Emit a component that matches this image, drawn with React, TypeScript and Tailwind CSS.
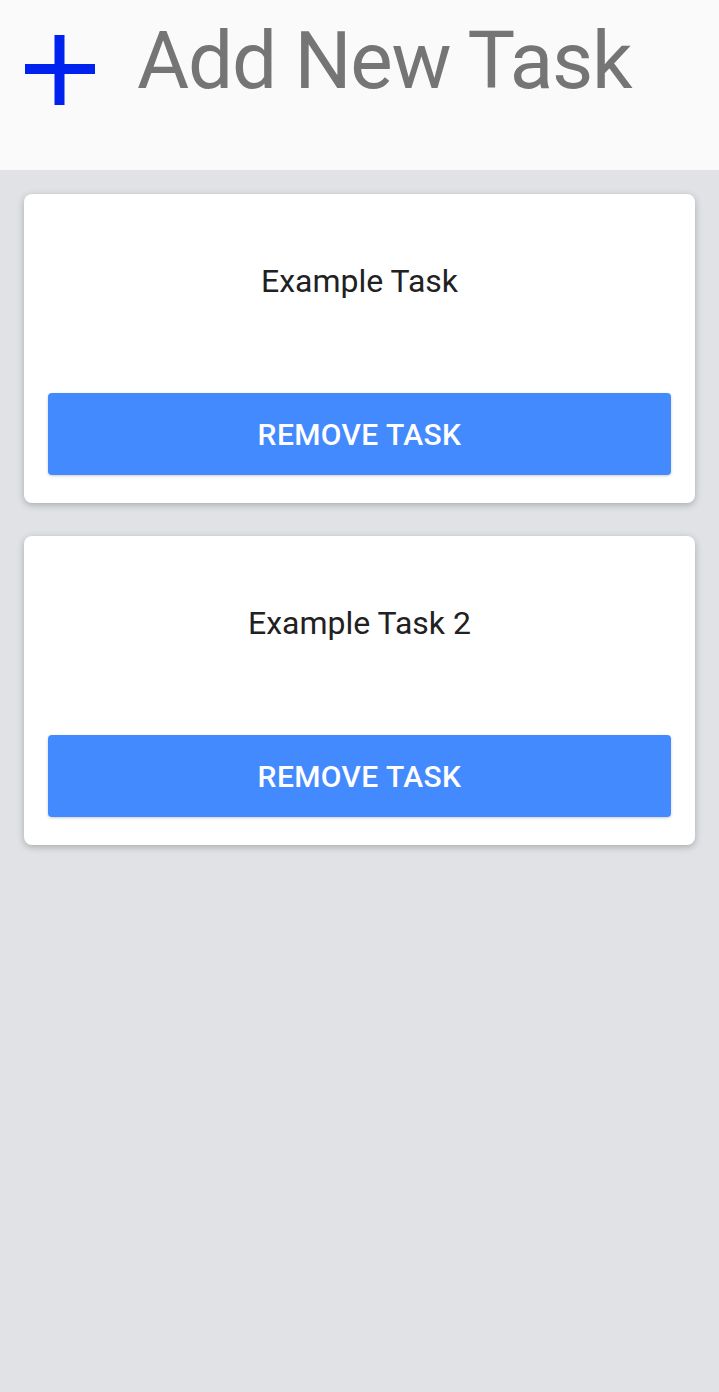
const tasks = ["Example Task", "Example Task 2"];

function PlusIcon() {
  return (
    <svg width="70" height="70" viewBox="0 0 70 70" className="shrink-0">
      <rect x="0" y="29" width="70" height="10" fill="#0022ee" />
      <rect x="29.5" y="0" width="10" height="70" fill="#0022ee" />
    </svg>
  );
}

function TaskCard({ title }: { title: string }) {
  return (
    <div className="bg-white rounded-lg shadow-[0_2px_7px_rgba(0,0,0,0.25)] px-6 pt-[69px] pb-[28px]">
      <p className="text-center text-[32px] leading-[36px] text-[#212121]">{title}</p>
      <button className="mt-[94px] w-full h-[82px] rounded bg-[#448aff] text-white text-[30px] font-medium tracking-[0.4px] uppercase shadow-[0_1px_3px_rgba(0,0,0,0.2)]">
        Remove Task
      </button>
    </div>
  );
}

export default function App() {
  return (
    <div className="min-h-[1392px] bg-[#e1e2e5] font-['Roboto',sans-serif]">
      <header className="h-[170px] bg-[#fafafa] flex items-start pl-[25px] pt-[35px]">
        <PlusIcon />
        <h1 className="ml-[42px] -mt-[21px] text-[80px] leading-[95px] tracking-[-1.2px] text-[#757575] font-normal">Add New Task</h1>
      </header>
      <main className="flex flex-col gap-[33px] px-6 pt-6">
        {tasks.map((t) => (
          <TaskCard key={t} title={t} />
        ))}
      </main>
    </div>
  );
}
